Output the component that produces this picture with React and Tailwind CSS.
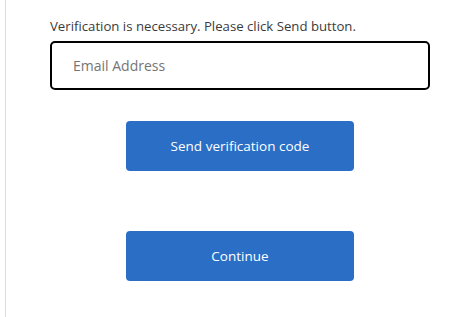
export default function App() {
  return (
    <div className="w-[465px] h-[317px] bg-white pl-[5px] font-['Segoe_UI','Open_Sans',sans-serif]">
      <div className="h-full border-l border-[#dcdcdc] pl-[44px] pt-[16px]">
        <div className="w-[380px]">
          <p className="text-[13.2px] leading-[20px] text-[#3b3b3b]">
            Verification is necessary. Please click Send button.
          </p>
          <input
            type="email"
            autoFocus
            placeholder="Email Address"
            className="mt-[5px] block w-[380px] h-[49px] rounded-[5px] border-2 border-black pl-[21px] pr-[20px] text-[14px] text-[#333] caret-black placeholder:text-[#757575] outline-none"
          />
          <div className="flex flex-col items-center">
            <button className="mt-[31px] w-[228px] h-[50px] rounded-[4px] bg-[#2a6ec6] text-white text-[13.5px]">
              Send verification code
            </button>
            <button className="mt-[60px] w-[228px] h-[50px] rounded-[4px] bg-[#2a6ec6] text-white text-[13.5px]">
              Continue
            </button>
          </div>
        </div>
      </div>
    </div>
  );
}
